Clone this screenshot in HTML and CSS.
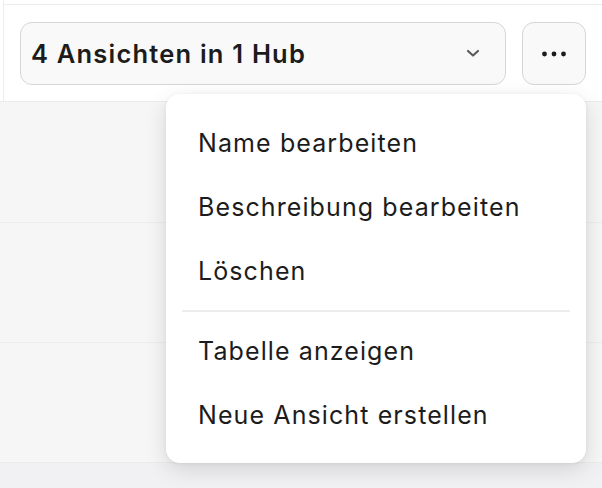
FILE: index.html
```html
<!DOCTYPE html>
<html lang="de">
<head>
<meta charset="utf-8">
<title>Ansichten</title>
<link rel="stylesheet" href="styles.css">
</head>
<body>
<div class="page">
  <header class="header">
    <div class="gutter"></div>
    <div class="header-main">
      <div class="strip"></div>
      <div class="controls">
        <button class="select" type="button">
          <span class="select-label">4 Ansichten in 1 Hub</span>
          <svg class="chevron" width="14" height="9" viewBox="0 0 14 9" aria-hidden="true">
            <path d="M2 2l5 4.5L12 2" fill="none" stroke="#5c5c5c" stroke-width="2.2" stroke-linecap="round" stroke-linejoin="round"/>
          </svg>
        </button>
        <button class="more" type="button" aria-label="Mehr">
          <svg width="26" height="6" viewBox="0 0 26 6" aria-hidden="true">
            <circle cx="3.5" cy="3" r="2.4" fill="#1c1c1c"/>
            <circle cx="13" cy="3" r="2.4" fill="#1c1c1c"/>
            <circle cx="22.5" cy="3" r="2.4" fill="#1c1c1c"/>
          </svg>
        </button>
      </div>
    </div>
  </header>
  <div class="rows">
    <div class="row first"></div>
    <div class="row"></div>
    <div class="row"></div>
    <div class="row last"></div>
  </div>

  <div class="menu" role="menu">
    <div class="menu-item">Name bearbeiten</div>
    <div class="menu-item">Beschreibung bearbeiten</div>
    <div class="menu-item">Löschen</div>
    <div class="menu-divider"></div>
    <div class="menu-item">Tabelle anzeigen</div>
    <div class="menu-item">Neue Ansicht erstellen</div>
  </div>
</div>
</body>
</html>
```

FILE: styles.css
```css
* { box-sizing: border-box; }

html, body {
  margin: 0;
  padding: 0;
  background: #f6f6f6;
  font-family: Inter, "Noto Sans", "Liberation Sans", sans-serif;
  color: #1c1c1c;
}

.page {
  position: relative;
  width: 602px;
  height: 488px;
  overflow: hidden;
}

.header {
  display: flex;
  height: 102px;
  background: #fff;
  border-bottom: 1px solid #ececec;
}

.gutter {
  width: 3px;
  flex: none;
}

.header-main {
  flex: 1;
  border-left: 1px solid #ededed;
  display: flex;
  flex-direction: column;
}

.strip {
  height: 5px;
  border-bottom: 1px solid #ececec;
}

.controls {
  display: flex;
  gap: 16px;
  padding: 17px 16px 0 16px;
}

.select {
  flex: 1;
  height: 63px;
  display: flex;
  align-items: center;
  justify-content: space-between;
  padding: 0 25px 0 10px;
  background: #f9f9f9;
  border: 1.5px solid #d6d6d6;
  border-radius: 12px;
  font-family: inherit;
  font-size: 25.5px;
  font-weight: 600;
  color: #1c1c1c;
  letter-spacing: 1.2px;
  cursor: pointer;
}

.chevron {
  display: block;
}

.more {
  width: 64px;
  height: 63px;
  flex: none;
  display: flex;
  align-items: center;
  justify-content: center;
  background: #f9f9f9;
  border: 1.5px solid #d6d6d6;
  border-radius: 12px;
  padding: 0;
  cursor: pointer;
}

.rows {
  display: flex;
  flex-direction: column;
}

.row {
  height: 120px;
  border-bottom: 1px solid #ececec;
  background: #f6f6f6;
}

.row.first {
  height: 121px;
}

.row.last {
  height: 40px;
  border-bottom: none;
  background: #f1f1f3;
}

.menu {
  position: absolute;
  left: 166px;
  top: 94px;
  width: 420px;
  height: 369px;
  background: #fff;
  border-radius: 14px;
  box-shadow: 0 6px 22px rgba(0, 0, 0, 0.13), 0 1px 4px rgba(0, 0, 0, 0.06);
  padding: 17px 0 15px;
  display: flex;
  flex-direction: column;
}

.menu-item {
  height: 64px;
  display: flex;
  align-items: center;
  padding-left: 32px;
  font-size: 25px;
  font-weight: 400;
  color: #1c1c1c;
  letter-spacing: 1.1px;
}

.menu-divider {
  height: 2px;
  background: #ededed;
  margin: 7px 16px 7px 16px;
}
```
